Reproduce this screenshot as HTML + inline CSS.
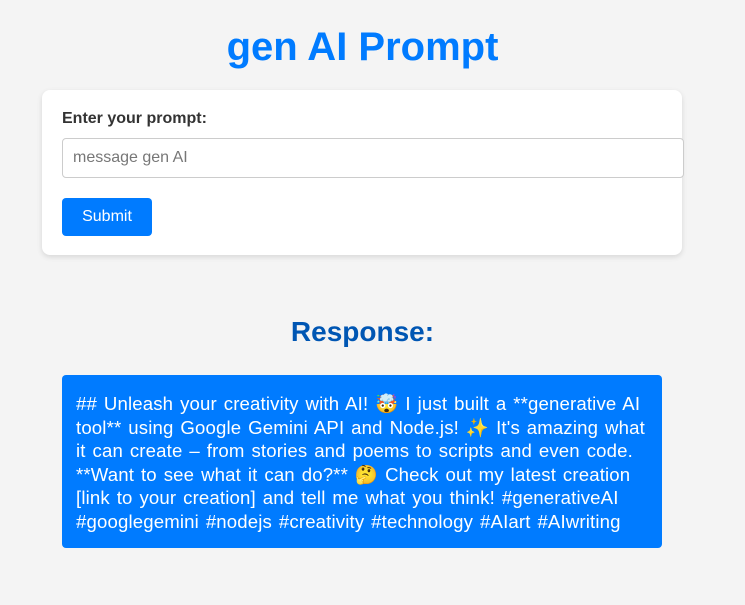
<!DOCTYPE html>
<html><head><meta charset="utf-8"><style>
body{margin:0;background:#f4f4f4;font-family:"Liberation Sans",Arial,sans-serif;width:745px;height:605px;overflow:hidden;position:relative}
h1{position:absolute;top:24px;left:0;width:725px;text-align:center;margin:0;font-size:40px;color:#007bff;font-weight:bold;line-height:46px}
.card{position:absolute;left:42px;top:90px;width:640px;height:165px;background:#fff;border-radius:8px;box-shadow:0 2px 6px rgba(0,0,0,.12)}
.lbl{position:absolute;left:20px;top:20px;font-weight:bold;font-size:16px;color:#333}
.inp{position:absolute;left:20px;top:48px;height:38px;border:1px solid #ccc;border-radius:4px;font-size:16px;color:#777;line-height:38px;padding-left:10px;width:610px;background:#fff}
.btn{position:absolute;left:20px;top:108px;width:90px;height:38px;background:#007bff;border-radius:4px;color:#fff;font-size:16px;text-align:center;line-height:38px}
h2{position:absolute;top:314px;left:0;width:725px;text-align:center;margin:0;font-size:28px;color:#0056b3;line-height:36px}
.resp{position:absolute;left:62px;top:375px;width:572px;height:145px;padding:17px 14px 11px 14px;background:#007bff;color:#fff;border-radius:4px;font-size:18.6px;line-height:23.6px;white-space:nowrap;word-spacing:1.6px;letter-spacing:0.15px}
</style></head><body>
<h1>gen AI Prompt</h1>
<div class="card"><div class="lbl">Enter your prompt:</div><div class="inp">message gen AI</div><div class="btn">Submit</div></div>
<h2>Response:</h2>
<div class="resp">## Unleash your creativity with AI! 🤯 I just built a **generative AI<br>tool** using Google Gemini API and Node.js! ✨ It's amazing what<br>it can create – from stories and poems to scripts and even code.<br>**Want to see what it can do?** 🤔 Check out my latest creation<br>[link to your creation] and tell me what you think! #generativeAI<br>#googlegemini #nodejs #creativity #technology #AIart #AIwriting</div>
</body></html>
